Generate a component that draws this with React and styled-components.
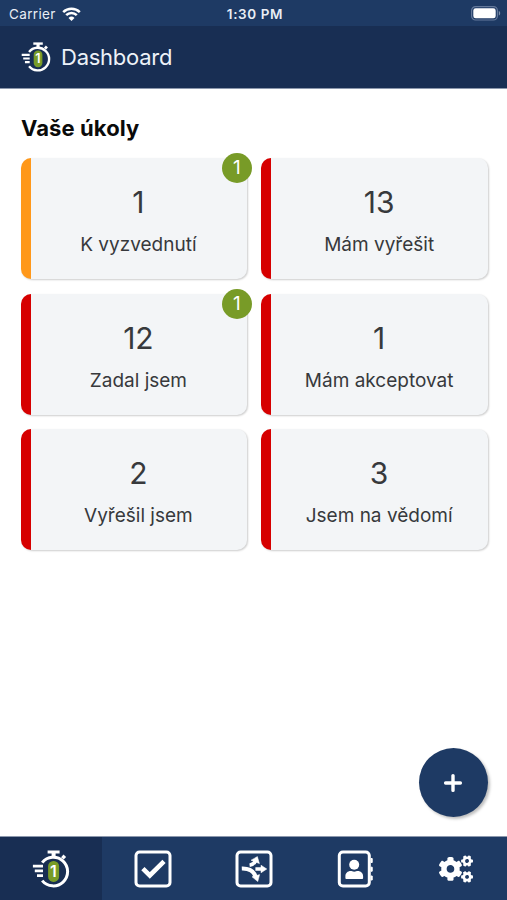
import React, { useState } from "react";
import styled, { createGlobalStyle } from "styled-components";
import { FaCogs } from "react-icons/fa";

const GlobalStyle = createGlobalStyle`
  * {
    box-sizing: border-box;
  }

  body {
    margin: 0;
    background-color: #fff;
    font-family: Inter, "Liberation Sans", sans-serif;
  }
`;

const Screen = styled.div`
  display: flex;
  flex-direction: column;
  width: 100%;
  height: 100vh;
`;

const StatusBar = styled.div`
  display: grid;
  grid-template-columns: 1fr auto 1fr;
  align-items: center;
  height: 26px;
  padding: 1px 6px 0 9px;
  background-color: #1e3a64;
  color: #e9eef5;
  font-size: 13.5px;
  line-height: 16px;
`;

const Carrier = styled.div`
  display: flex;
  align-items: center;
  gap: 6px;
  letter-spacing: 0.35px;
`;

const Time = styled.div`
  font-weight: 600;
  letter-spacing: 0.6px;
`;

const Battery = styled.div`
  display: flex;
  justify-content: flex-end;
`;

const Header = styled.header`
  display: flex;
  align-items: center;
  gap: 10px;
  height: 63px;
  padding: 0 21px;
  background-color: #182e53;
  border-bottom: 1px solid #8c98ad;
`;

const Title = styled.h1`
  margin: 0;
  color: #edf2f8;
  font-size: 22px;
  font-weight: 400;
  letter-spacing: -0.25px;
  line-height: 28px;
`;

const Content = styled.main`
  display: flex;
  flex-direction: column;
  flex: 1;
  padding: 25px 19px 19px 20.5px;
`;

const SectionTitle = styled.h2`
  margin: 0 0 16px;
  padding-left: 0.5px;
  color: #0a0a0a;
  font-size: 22px;
  font-weight: 700;
  letter-spacing: 0.1px;
  line-height: 28px;
`;

const CardGrid = styled.div`
  display: grid;
  grid-template-columns: 1fr 1fr;
  gap: 14.7px 14px;
`;

const Card = styled.div`
  position: relative;
  display: flex;
  flex-direction: column;
  align-items: center;
  height: 121px;
  padding: 26px 1px 0 0;
  border-left: 10px solid ${(props) => props.$color};
  border-radius: 10px;
  background-color: #f3f5f7;
  box-shadow: 1px 1px 2px rgba(0, 0, 0, 0.2);
  color: #37393c;
`;

const Count = styled.div`
  font-size: 30px;
  line-height: 36px;
`;

const Label = styled.div`
  margin-top: 13px;
  font-size: 19px;
  line-height: 24px;
  white-space: nowrap;
`;

const Badge = styled.div`
  position: absolute;
  top: -5px;
  right: -4.5px;
  width: 30px;
  height: 30px;
  border-radius: 50%;
  background-color: #789b27;
  color: #fff;
  font-size: 19px;
  line-height: 30px;
  text-align: center;
`;

const AddButton = styled.button`
  display: flex;
  align-items: center;
  justify-content: center;
  align-self: flex-end;
  width: 69px;
  height: 69px;
  margin-top: auto;
  padding: 0 1px 0 0;
  border: none;
  border-radius: 50%;
  background-color: #1e3a64;
  box-shadow: 2px 2px 3px rgba(0, 0, 0, 0.26);
  cursor: pointer;
`;

const TabBar = styled.nav`
  display: grid;
  grid-template-columns: 102px repeat(4, 1fr);
  height: 64px;
  border-top: 1px solid #8c98ad;
  background-color: #1e3a64;
`;

const TabButton = styled.button`
  display: flex;
  align-items: center;
  justify-content: center;
  padding: 0;
  border: none;
  background-color: ${(props) => (props.$active ? "#182e53" : "transparent")};
  color: #fff;
  cursor: pointer;
`;

const StopwatchIcon = ({ size }) => (
  <svg width={size} height={size} viewBox="0 0 38 38" fill="none">
    <path
      d="M10.2 12.6A14.3 14.3 0 1 1 10.2 30.6"
      stroke="#fff"
      strokeWidth="3"
    />
    <path d="M15.6 2h12" stroke="#fff" strokeWidth="3" />
    <path d="M21.6 2v5.4" stroke="#fff" strokeWidth="4" />
    <path d="M30.4 8.4l2.4-2.6" stroke="#fff" strokeWidth="3.6" />
    <path
      d="M.9 16.2H11M2.8 20.9H11M5 25.6H11"
      stroke="#fff"
      strokeWidth="2.8"
    />
    <rect x="16.1" y="10.9" width="11" height="21" rx="5.3" fill="#789b27" />
    <text
      x="21.4"
      y="27.2"
      fill="#fff"
      fontFamily="Inter, sans-serif"
      fontSize="16"
      fontWeight="600"
      textAnchor="middle"
    >
      1
    </text>
  </svg>
);

const WifiIcon = () => (
  <svg width="19" height="14" viewBox="0 0 19 14" fill="none">
    <path
      d="M1.2 5.1a11.8 11.8 0 0 1 16.6 0M4.2 8.2a7.5 7.5 0 0 1 10.6 0"
      stroke="#fff"
      strokeWidth="2.5"
    />
    <path d="M9.5 14l-3-3.1a4.3 4.3 0 0 1 6 0z" fill="#fff" />
  </svg>
);

const BatteryIcon = () => (
  <svg width="30" height="15" viewBox="0 0 30 15" fill="none">
    <rect x=".6" y=".6" width="25.8" height="13.4" rx="4" stroke="#64799b" strokeWidth="1.2" />
    <rect x="2.3" y="2.3" width="22.4" height="10" rx="2.4" fill="#fff" />
    <path d="M27.8 5v4.6c1.9-.7 1.9-3.9 0-4.6z" fill="#7f90ab" />
  </svg>
);

const PlusIcon = () => (
  <svg width="20" height="20" viewBox="0 0 20 20">
    <path
      d="M10 2.6v14.8M2.6 10h14.8"
      stroke="#fff"
      strokeWidth="3.4"
      strokeLinecap="round"
    />
  </svg>
);

const CheckIcon = () => (
  <svg width="38" height="38" viewBox="0 0 38 38" fill="none" stroke="#fff">
    <rect x="2" y="2" width="34" height="34" rx="3.6" strokeWidth="3" />
    <path d="M8.9 18.6l6.9 6.9L30 11.4" strokeWidth="4.6" />
  </svg>
);

const DelegateIcon = () => (
  <svg width="38" height="38" viewBox="0 0 38 38" fill="none" stroke="#fff">
    <rect x="2" y="2" width="34" height="34" rx="3.6" strokeWidth="3" />
    <path d="M6.8 18.6C13 18.4 18.6 20.4 20.6 26.6" strokeWidth="4" />
    <path d="M14.6 15.2c3-.4 5-2 6-4.6M20.4 19h6" strokeWidth="3.6" />
    <path
      d="M16 10.2l6.4-3.6 2 7zM26 15.2l5.8 3.8-5.8 3.8zM17 26.8l7.6-2.2-1.8 7z"
      fill="#fff"
      stroke="#fff"
      strokeWidth=".5"
      strokeLinejoin="round"
    />
  </svg>
);

const ContactsIcon = () => (
  <svg width="37" height="38" viewBox="0 0 37 38" fill="none">
    <rect x="2.3" y="2" width="30" height="34" rx="3.6" stroke="#fff" strokeWidth="3" />
    <path
      d="M34 8.5h1.2v4H34zM34 17.2h1.2v4H34zM34 26h1.2v4H34z"
      fill="#fff"
      stroke="#fff"
      strokeWidth="1"
      strokeLinejoin="round"
    />
    <circle cx="17.2" cy="14.8" r="5" fill="#fff" />
    <path
      d="M8.4 27.9v-1.6c0-3 2.3-5.2 5.2-5.2 1.3 0 1.9.7 3.6.7s2.3-.7 3.6-.7c2.9 0 5.3 2.2 5.3 5.2v1.6c0 .6-.5 1-1.1 1H9.5c-.6 0-1.1-.4-1.1-1z"
      fill="#fff"
    />
  </svg>
);

const cards = [
  { count: 1, label: "K vyzvednutí", color: "#ff981a", badge: 1 },
  { count: 13, label: "Mám vyřešit", color: "#d60000" },
  { count: 12, label: "Zadal jsem", color: "#d60000", badge: 1 },
  { count: 1, label: "Mám akceptovat", color: "#d60000" },
  { count: 2, label: "Vyřešil jsem", color: "#d60000" },
  { count: 3, label: "Jsem na vědomí", color: "#d60000" },
];

const tabs = [
  { name: "dashboard", icon: <StopwatchIcon size={38} /> },
  { name: "tasks", icon: <CheckIcon /> },
  { name: "delegate", icon: <DelegateIcon /> },
  { name: "contacts", icon: <ContactsIcon /> },
  { name: "settings", icon: <FaCogs size={34} /> },
];

const TaskCard = ({ count, label, color, badge }) => (
  <Card $color={color}>
    <Count>{count}</Count>
    <Label>{label}</Label>
    {badge && <Badge>{badge}</Badge>}
  </Card>
);

const App = () => {
  const [currentTab, setCurrentTab] = useState(0);

  return (
    <>
      <GlobalStyle />
      <Screen>
        <StatusBar>
          <Carrier>
            Carrier
            <WifiIcon />
          </Carrier>
          <Time>1:30 PM</Time>
          <Battery>
            <BatteryIcon />
          </Battery>
        </StatusBar>
        <Header>
          <StopwatchIcon size={30} />
          <Title>Dashboard</Title>
        </Header>
        <Content>
          <SectionTitle>Vaše úkoly</SectionTitle>
          <CardGrid>
            {cards.map((card) => (
              <TaskCard key={card.label} {...card} />
            ))}
          </CardGrid>
          <AddButton aria-label="add">
            <PlusIcon />
          </AddButton>
        </Content>
        <TabBar>
          {tabs.map((tab, index) => (
            <TabButton
              key={tab.name}
              aria-label={tab.name}
              $active={index === currentTab}
              onClick={() => setCurrentTab(index)}
            >
              {tab.icon}
            </TabButton>
          ))}
        </TabBar>
      </Screen>
    </>
  );
};

export default App;
